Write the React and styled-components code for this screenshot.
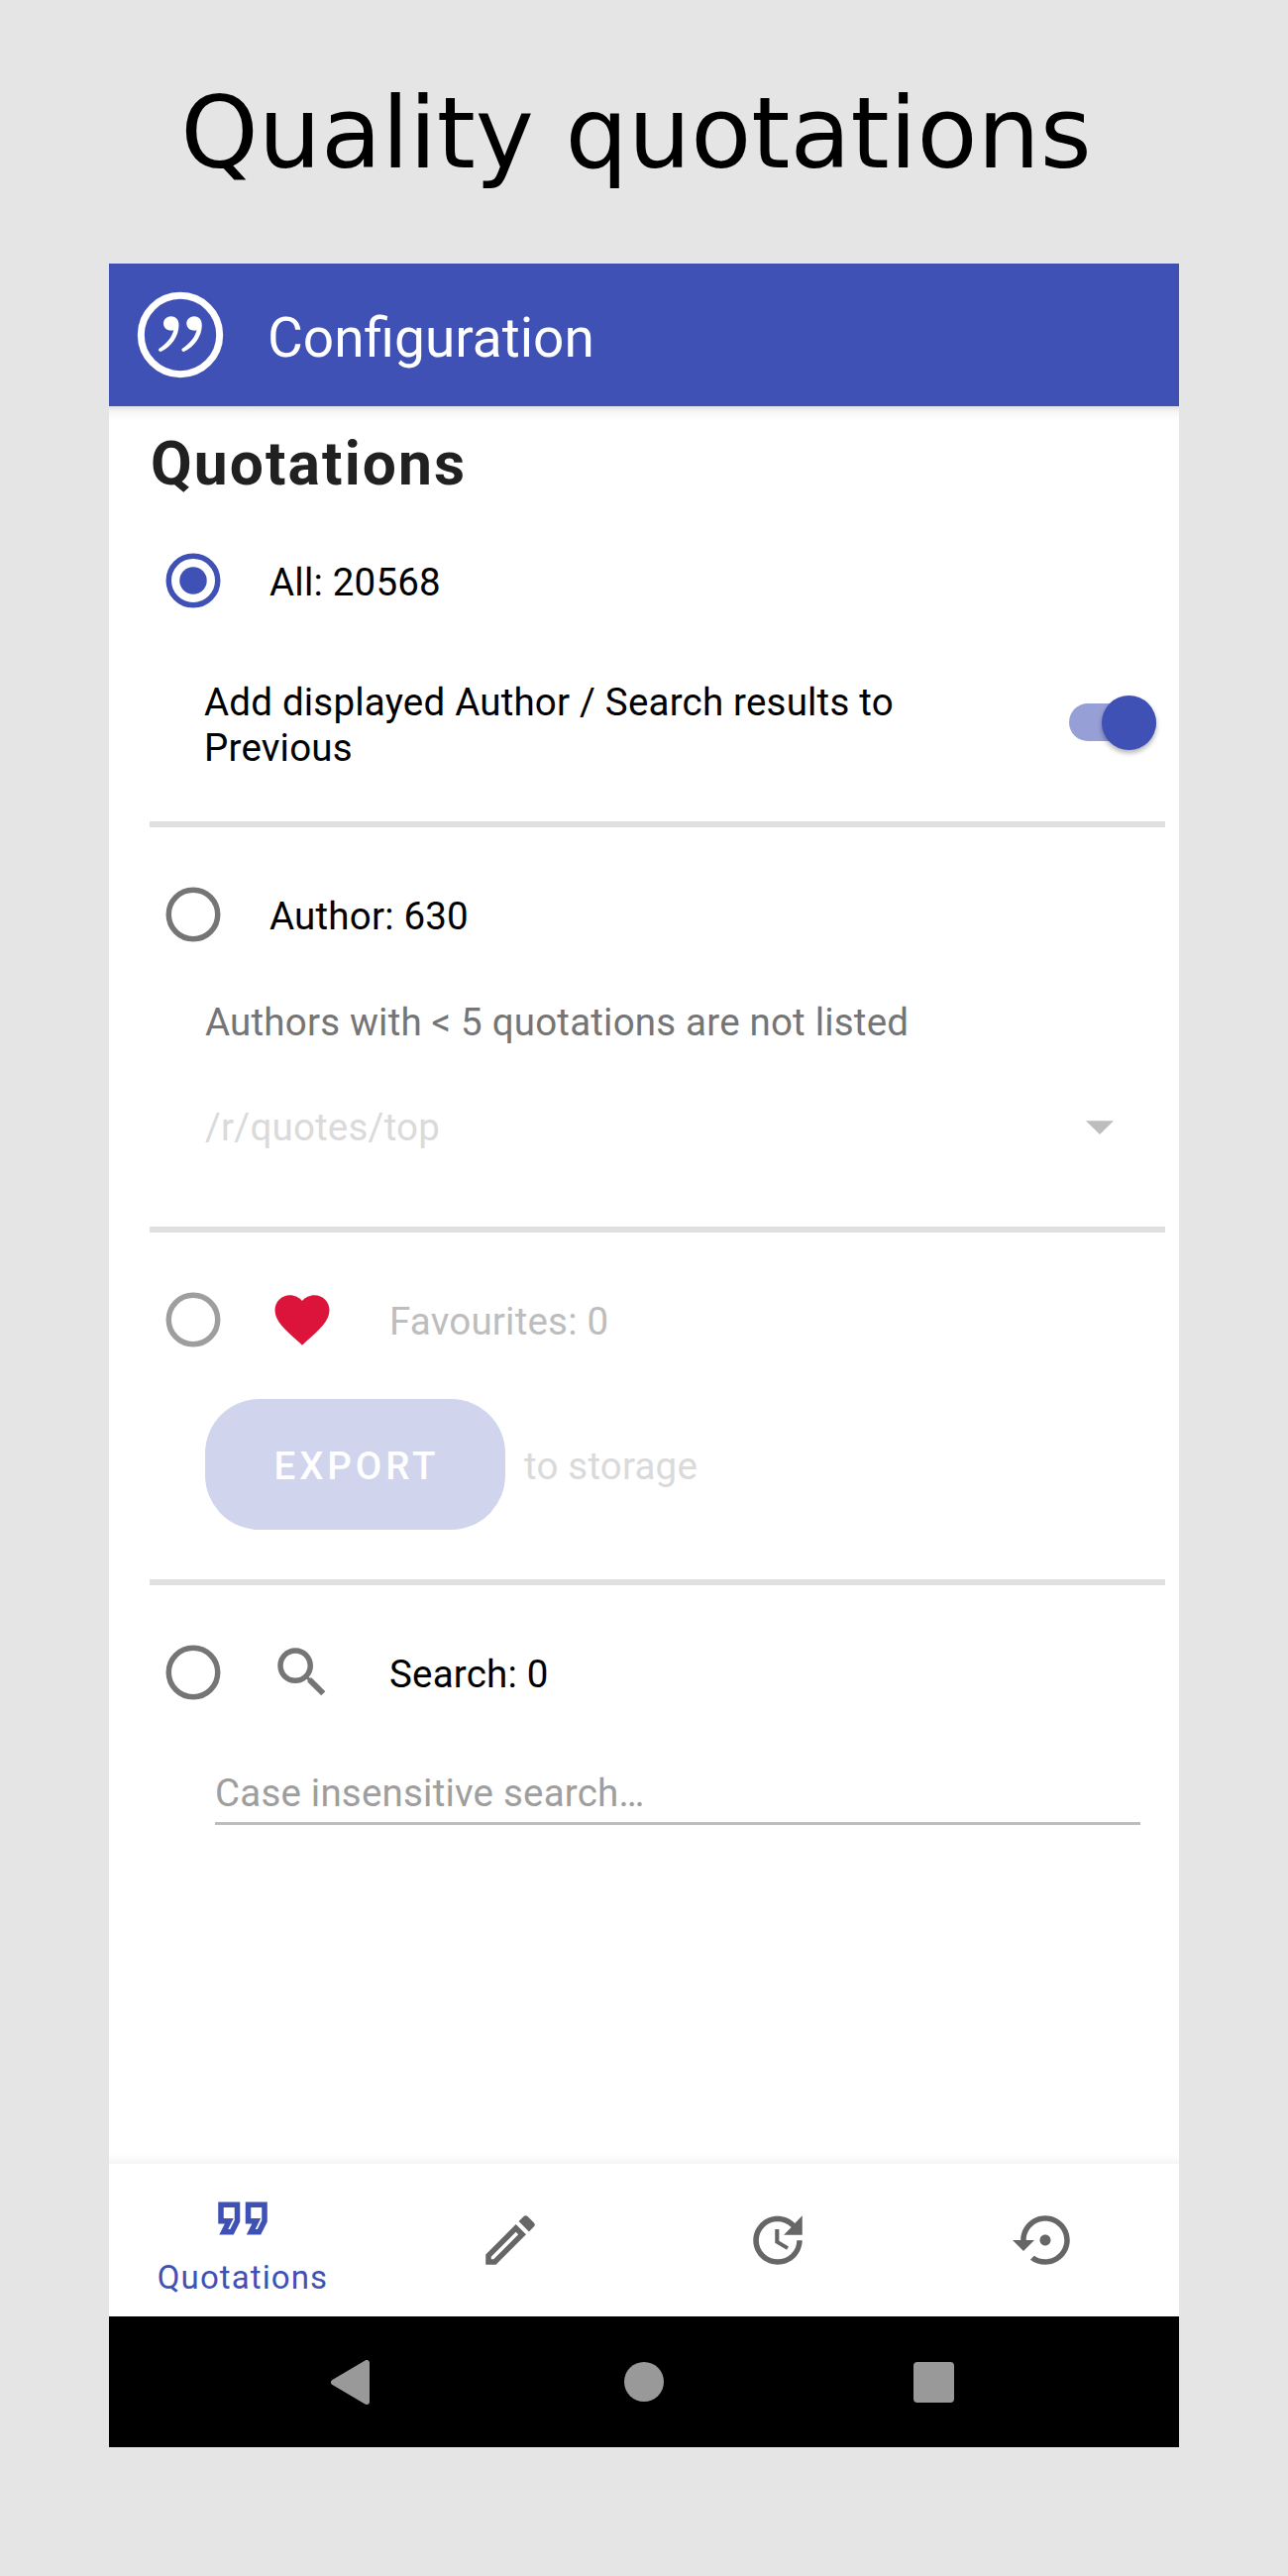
import React from "react";
import styled, { createGlobalStyle } from "styled-components";

const PRIMARY = "#3f51b5";

const GlobalStyle = createGlobalStyle`
  *, *::before, *::after { box-sizing: border-box; }
  body { margin: 0; background: #e5e5e5; }
`;

const Page = styled.main`
  width: 1300px;
  height: 2600px;
  display: flex;
  flex-direction: column;
  align-items: center;
  background: #e5e5e5;
  font-family: Roboto, "Liberation Sans", sans-serif;
  font-size: 38.5px;
  line-height: 46px;
  letter-spacing: 0.2px;
  color: #000;
`;

const Title = styled.h1`
  height: 266px;
  margin: 0;
  padding: 75px 16px 0 0;
  font: 400 99.8px/120px "DejaVu Sans", sans-serif;
  letter-spacing: 0;
  white-space: nowrap;
`;

const Phone = styled.section`
  width: 1080px;
  height: 2204px;
  display: flex;
  flex-direction: column;
  background: #fff;
`;

const AppBar = styled.header`
  height: 144px;
  flex: none;
  display: flex;
  align-items: center;
  gap: 43px;
  padding-left: 27px;
  background: ${PRIMARY};
`;

const AppTitle = styled.span`
  padding-top: 6px;
  font-size: 55px;
  line-height: 64px;
  letter-spacing: 0;
  color: #fff;
`;

const Content = styled.div`
  flex: 1;
  padding: 0 14px 0 41px;
  background:
    linear-gradient(#e2e2e2, #f5f5f5 40%, #fff) top / 100% 14px no-repeat,
    linear-gradient(#fff, #f5f5f5) bottom / 100% 10px no-repeat;
`;

const Heading = styled.h2`
  margin: 0;
  height: 117px;
  padding-left: 1px;
  font-size: 60.5px;
  font-weight: 700;
  line-height: 117px;
  letter-spacing: 2.1px;
  color: #212121;
`;

const Section = styled.section`
  padding-top: ${(p) => (p.$first ? 0 : 29)}px;
  border-bottom: ${(p) => (p.$last ? "none" : "6px solid #e0e0e0")};
`;

const OptionRow = styled.label`
  height: 118px;
  display: flex;
  align-items: center;
  padding-left: 11px;
`;

const OptionIcon = styled.span`
  display: flex;
  margin-left: 44px;
  color: ${(p) => p.$color};
`;

const OptionLabel = styled.span`
  padding-top: 3px;
  margin-left: ${(p) => (p.$wide ? 55 : 44)}px;
  color: ${(p) => (p.$disabled ? "#bdbdbd" : "#000")};
`;

const RadioSvg = styled.svg`
  flex: none;
  fill: none;
  stroke: ${(p) => p.$color};
  stroke-width: 2;
`;

const SwitchRow = styled.div`
  height: 184px;
  display: flex;
  justify-content: space-between;
  padding: 41px 9px 0 55px;
`;

const SwitchText = styled.span`
  width: 740px;
`;

const Track = styled.span`
  width: 88px;
  height: 38px;
  margin-top: 24px;
  display: flex;
  align-items: center;
  justify-content: flex-end;
  border-radius: 19px;
  background: #979fd7;
`;

const Thumb = styled.span`
  width: 55px;
  height: 55px;
  border-radius: 50%;
  background: ${PRIMARY};
  box-shadow: 0 3px 5px rgba(0, 0, 0, 0.3);
`;

const Note = styled.p`
  margin: 0;
  padding: 27px 0 0 56px;
  color: #757575;
`;

const Spinner = styled.div`
  height: 100px;
  margin: 33px 0 50px;
  padding: 0 52px 0 56px;
  display: flex;
  align-items: center;
  justify-content: space-between;
  color: #dadada;
`;

const ExportRow = styled.div`
  padding: 21px 0 50px 56px;
  display: flex;
  align-items: center;
  gap: 19px;
  color: #dadada;
`;

const ExportButton = styled.button`
  width: 303px;
  height: 132px;
  padding: 4px 0 0 3px;
  border: 0;
  border-radius: 55px;
  background: #d0d4ed;
  font: 500 38.5px/46px Roboto, sans-serif;
  letter-spacing: 3.9px;
  color: #fff;
`;

const ExportHint = styled.span`
  padding-top: 3px;
`;

const SearchField = styled.div`
  margin: 0 25px 0 66px;
  padding: 40px 0 6px;
  border-bottom: 3px solid #bdbdbd;
  color: #9e9e9e;
`;

const BottomNav = styled.nav`
  height: 154px;
  flex: none;
  display: grid;
  grid-template-columns: repeat(4, 1fr);
  background: #fff;
`;

const NavItem = styled.a`
  display: flex;
  flex-direction: column;
  align-items: center;
  padding-top: ${(p) => (p.$active ? 22 : 44)}px;
  color: ${(p) => (p.$active ? PRIMARY : "#666")};
`;

const NavLabel = styled.span`
  margin-top: 7px;
  font-size: 33px;
  line-height: 40px;
  letter-spacing: 1.1px;
`;

const SystemBar = styled.footer`
  height: 132px;
  flex: none;
  display: flex;
  align-items: center;
  justify-content: space-between;
  padding: 0 227px 0 224px;
  background: #000;
`;

const HomeDot = styled.span`
  width: 40px;
  height: 40px;
  border-radius: 50%;
  background: #999;
`;

const RecentSquare = styled.span`
  width: 41px;
  height: 41px;
  border-radius: 4px;
  background: #999;
`;

const Icon = ({ d }) => (
  <svg width="66" height="66" viewBox="0 0 24 24" fill="currentColor">
    <path d={d} />
  </svg>
);

const ICONS = {
  quote:
    "M18.62 18h-5.24l2-4H13V6h8v7.24L18.62 18zm-2-2h.76L19 12.76V8h-4v4h3.62l-2 4zm-8 2H3.38l2-4H3V6h8v7.24L8.62 18zm-2-2h.76L9 12.76V8H5v4h3.62l-2 4z",
  edit:
    "M14.06 9.02l.92.92L5.92 19H5v-.92l9.06-9.06M17.66 3c-.25 0-.51.1-.7.29l-1.83 1.83 3.75 3.75 1.83-1.83c.39-.39.39-1.02 0-1.41l-2.34-2.34c-.2-.2-.45-.29-.71-.29zm-3.6 3.19L3 17.25V21h3.75L17.81 9.94l-3.75-3.75z",
  update:
    "M21 10.12h-6.78l2.74-2.82c-2.73-2.7-7.15-2.8-9.88-.1-2.73 2.71-2.73 7.08 0 9.79 2.73 2.71 7.15 2.71 9.88 0C18.32 15.65 19 14.08 19 12.1h2c0 1.98-.88 4.55-2.64 6.29-3.51 3.48-9.21 3.48-12.72 0-3.5-3.47-3.53-9.11-.02-12.58 3.51-3.47 9.14-3.47 12.65 0L21 3v7.12zM12.5 8v4.25l3.5 2.08-.72 1.21L11 13V8h1.5z",
  restore:
    "M14 12c0-1.1-.9-2-2-2s-2 .9-2 2 .9 2 2 2 2-.9 2-2zm-2-9c-4.97 0-9 4.03-9 9H0l4 4 4-4H5c0-3.87 3.13-7 7-7s7 3.13 7 7-3.13 7-7 7c-1.51 0-2.91-.49-4.06-1.3l-1.42 1.44C8.04 20.3 9.94 21 12 21c4.97 0 9-4.03 9-9s-4.03-9-9-9z",
  heart:
    "M12 21.35l-1.45-1.32C5.4 15.36 2 12.28 2 8.5 2 5.42 4.42 3 7.5 3c1.74 0 3.41.81 4.5 2.09C13.09 3.81 14.76 3 16.5 3 19.58 3 22 5.42 22 8.5c0 3.78-3.4 6.86-8.55 11.54L12 21.35z",
  search:
    "M15.5 14h-.79l-.28-.27C15.41 12.59 16 11.11 16 9.5 16 5.91 13.09 3 9.5 3S3 5.91 3 9.5 5.91 16 9.5 16c1.61 0 3.09-.59 4.23-1.57l.27.28v.79l5 4.99L20.49 19l-4.99-5zm-6 0C7.01 14 5 11.99 5 9.5S7.01 5 9.5 5 14 7.01 14 9.5 11.99 14 9.5 14z",
};

const QUOTE_MARK =
  "M53 39C58 39 60.8 42.5 60.8 48C60.8 59 53 70 43 74.5C41 75 39.5 73 41 71.5C49 66 54 60 55.5 53C54 53.5 53 53.5 52 53.3C48 53 45.3 50 45.3 46.3C45.3 42 49 39 53 39Z";

const Logo = () => (
  <svg width="90" height="90" viewBox="17.3 12.7 90 90">
    <circle cx="62.3" cy="57.7" r="39.7" fill="none" stroke="#fff" strokeWidth="7" />
    <path d={QUOTE_MARK} fill="#fff" />
    <path d={QUOTE_MARK} fill="#fff" transform="translate(23.3 0)" />
  </svg>
);

const Radio = ({ checked, color = "#757575" }) => (
  <RadioSvg width="66" height="66" viewBox="0 0 24 24" $color={checked ? PRIMARY : color}>
    <circle cx="12" cy="12" r="9" />
    {checked && <circle cx="12" cy="12" r="5" fill={PRIMARY} stroke="none" />}
  </RadioSvg>
);

export default function App() {
  return (
    <>
      <GlobalStyle />
      <Page>
        <Title>Quality quotations</Title>
        <Phone>
          <AppBar>
            <Logo />
            <AppTitle>Configuration</AppTitle>
          </AppBar>
          <Content>
            <Heading>Quotations</Heading>
            <Section $first>
              <OptionRow>
                <Radio checked />
                <OptionLabel>All: 20568</OptionLabel>
              </OptionRow>
              <SwitchRow>
                <SwitchText>Add displayed Author / Search results to Previous</SwitchText>
                <Track>
                  <Thumb />
                </Track>
              </SwitchRow>
            </Section>
            <Section>
              <OptionRow>
                <Radio />
                <OptionLabel>Author: 630</OptionLabel>
              </OptionRow>
              <Note>Authors with &lt; 5 quotations are not listed</Note>
              <Spinner>
                /r/quotes/top
                <svg width="28" height="14" viewBox="0 0 28 14">
                  <path d="M0 0.3H28L14 14Z" fill="#bdbdbd" />
                </svg>
              </Spinner>
            </Section>
            <Section>
              <OptionRow>
                <Radio color="#9e9e9e" />
                <OptionIcon $color="#dc143c">
                  <Icon d={ICONS.heart} />
                </OptionIcon>
                <OptionLabel $wide $disabled>Favourites: 0</OptionLabel>
              </OptionRow>
              <ExportRow>
                <ExportButton>EXPORT</ExportButton>
                <ExportHint>to storage</ExportHint>
              </ExportRow>
            </Section>
            <Section $last>
              <OptionRow>
                <Radio />
                <OptionIcon $color="#757575">
                  <Icon d={ICONS.search} />
                </OptionIcon>
                <OptionLabel $wide>Search: 0</OptionLabel>
              </OptionRow>
              <SearchField>Case insensitive search…</SearchField>
            </Section>
          </Content>
          <BottomNav>
            <NavItem $active>
              <Icon d={ICONS.quote} />
              <NavLabel>Quotations</NavLabel>
            </NavItem>
            <NavItem>
              <Icon d={ICONS.edit} />
            </NavItem>
            <NavItem>
              <Icon d={ICONS.update} />
            </NavItem>
            <NavItem>
              <Icon d={ICONS.restore} />
            </NavItem>
          </BottomNav>
          <SystemBar>
            <svg width="44" height="45" viewBox="0 0 44 45">
              <path
                d="M3 22.5L36 3V42Z"
                fill="#999"
                stroke="#999"
                strokeWidth="6"
                strokeLinejoin="round"
              />
            </svg>
            <HomeDot />
            <RecentSquare />
          </SystemBar>
        </Phone>
      </Page>
    </>
  );
}
